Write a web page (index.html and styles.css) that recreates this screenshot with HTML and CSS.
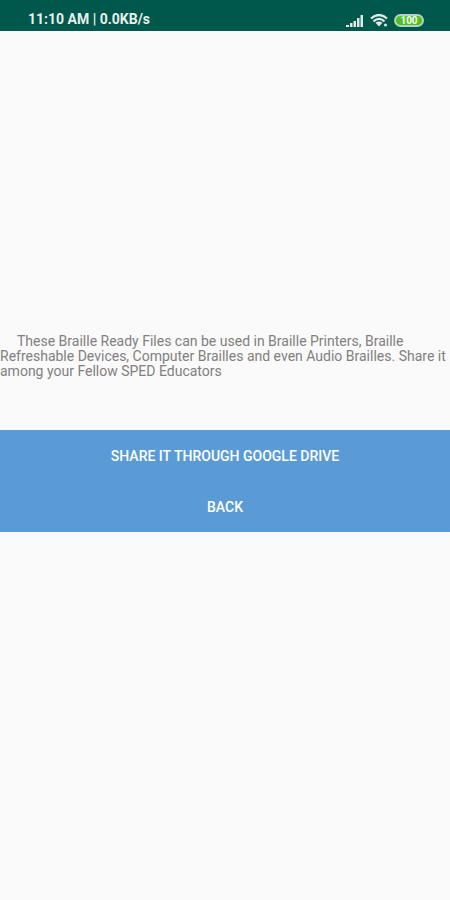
FILE: index.html
```html
<!DOCTYPE html>
<html lang="en">
<head>
  <meta charset="UTF-8">
  <meta name="viewport" content="width=device-width, initial-scale=1.0">
  <title>Braille Ready Files</title>
  <link rel="stylesheet" href="styles.css">
</head>
<body>
  <header class="status-bar">
    <span class="status-text">11:10 AM | 0.0KB/s</span>
    <div class="status-icons">
      <svg class="signal" width="18" height="12" viewBox="0 0 18 12" fill="#dfe9e7">
        <rect x="0" y="10" width="3" height="2"/>
        <rect x="4" y="8" width="2.5" height="4"/>
        <rect x="7.5" y="6" width="2.5" height="6"/>
        <rect x="11" y="3" width="2.5" height="9"/>
        <rect x="14.5" y="0" width="2.5" height="12"/>
      </svg>
      <svg class="wifi" width="18" height="13" viewBox="0 0 18 13" fill="none" stroke="#dfe9e7" stroke-width="2.3">
        <path d="M1 4.5 Q9 -2.5 17 4.5"/>
        <path d="M3.5 7.3 Q9 2.5 14.5 7.3"/>
        <path d="M5.5 8.8 Q9 6.2 12.5 8.8 L9 12.5 Z" fill="#dfe9e7" stroke="none"/>
        <circle cx="15.5" cy="11" r="1.5" fill="#dfe9e7" stroke="none"/>
      </svg>
      <span class="battery">100</span>
    </div>
  </header>
  <main class="content">
    <p class="info">These Braille Ready Files can be used in Braille Printers, Braille Refreshable Devices, Computer Brailles and even Audio Brailles. Share it among your Fellow SPED Educators</p>
    <div class="actions">
      <button class="action-button" type="button">SHARE IT THROUGH GOOGLE DRIVE</button>
      <button class="action-button" type="button">BACK</button>
    </div>
  </main>
</body>
</html>
```
FILE: styles.css
```css
body {
  margin: 0;
  min-height: 100vh;
  background-color: #fafafa;
  font-family: Roboto, Arial, sans-serif;
}

.status-bar {
  display: flex;
  justify-content: space-between;
  align-items: flex-end;
  box-sizing: border-box;
  height: 31px;
  padding: 0 26px 4px 28px;
  background-color: #00574b;
  color: #e8f0ee;
}

.status-text {
  font-size: 14px;
  line-height: 15px;
  font-weight: 700;
}

.status-icons {
  display: flex;
  align-items: center;
  gap: 6px;
}

.battery {
  box-sizing: border-box;
  width: 30px;
  height: 13px;
  border: 2px solid #b9cfca;
  border-radius: 7px;
  background-color: #4cc417;
  color: #ffffff;
  font-size: 10px;
  line-height: 9px;
  font-weight: 700;
  text-align: center;
}

.content {
  padding-top: 303px;
}

.info {
  margin: 0 0 51px;
  color: #808080;
  font-size: 14px;
  line-height: 15px;
  text-indent: 17px;
}

.actions {
  display: flex;
  flex-direction: column;
  background-color: #5b9bd5;
}

.action-button {
  height: 51px;
  padding: 0;
  border: none;
  background: none;
  color: #ffffff;
  font-family: inherit;
  font-size: 14px;
  font-weight: 500;
  cursor: pointer;
}
```
